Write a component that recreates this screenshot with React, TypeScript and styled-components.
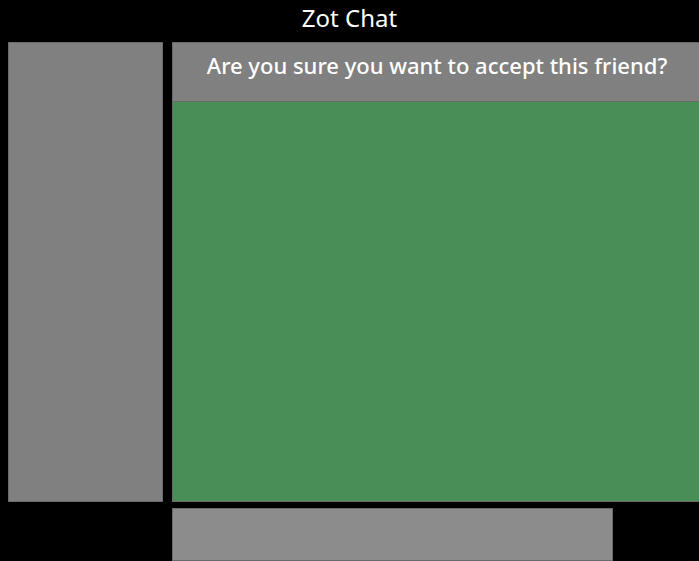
import styled, { createGlobalStyle } from 'styled-components';

const GlobalStyle = createGlobalStyle`
  html, body {
    margin: 0;
    padding: 0;
    background: #000;
    overflow: hidden;
  }
  body {
    font-family: "Noto Sans", "Open Sans", sans-serif;
    color: #fff;
  }
`;

const Page = styled.div`
  width: 100vw;
  height: 100vh;
  background: #000;
  display: flex;
  flex-direction: column;
`;

const Title = styled.h1`
  margin: 0;
  height: 42px;
  line-height: 36px;
  text-align: center;
  font-size: 24px;
  font-weight: 400;
`;

const Main = styled.div`
  display: grid;
  grid-template-columns: 155px 530px;
  column-gap: 9px;
  padding-left: 8px;
`;

const Sidebar = styled.aside`
  height: 460px;
  box-sizing: border-box;
  background: #808080;
  border: 1px solid #6a6a6a;
`;

const ChatColumn = styled.section`
  display: flex;
  flex-direction: column;
`;

const ChatHeader = styled.div`
  height: 59px;
  box-sizing: border-box;
  background: #808080;
  border: 1px solid #6a6a6a;
  border-bottom: none;
  display: flex;
  align-items: center;
  justify-content: center;
  padding-bottom: 14px;
  font-size: 22px;
  font-weight: 500;
`;

const Messages = styled.div`
  height: 401px;
  box-sizing: border-box;
  background: #4a8e57;
  border: 1px solid #6a6a6a;
`;

const InputRow = styled.div`
  padding: 6px 0 0 172px;
`;

const Input = styled.div`
  width: 441px;
  height: 53px;
  box-sizing: border-box;
  background: #8c8c8c;
  border: 1px solid #6a6a6a;
`;

export default function App() {
  return (
    <>
      <GlobalStyle />
      <Page>
        <Title>Zot Chat</Title>
        <Main>
          <Sidebar />
          <ChatColumn>
            <ChatHeader>Are you sure you want to accept this friend?</ChatHeader>
            <Messages />
          </ChatColumn>
        </Main>
        <InputRow>
          <Input />
        </InputRow>
      </Page>
    </>
  );
}
